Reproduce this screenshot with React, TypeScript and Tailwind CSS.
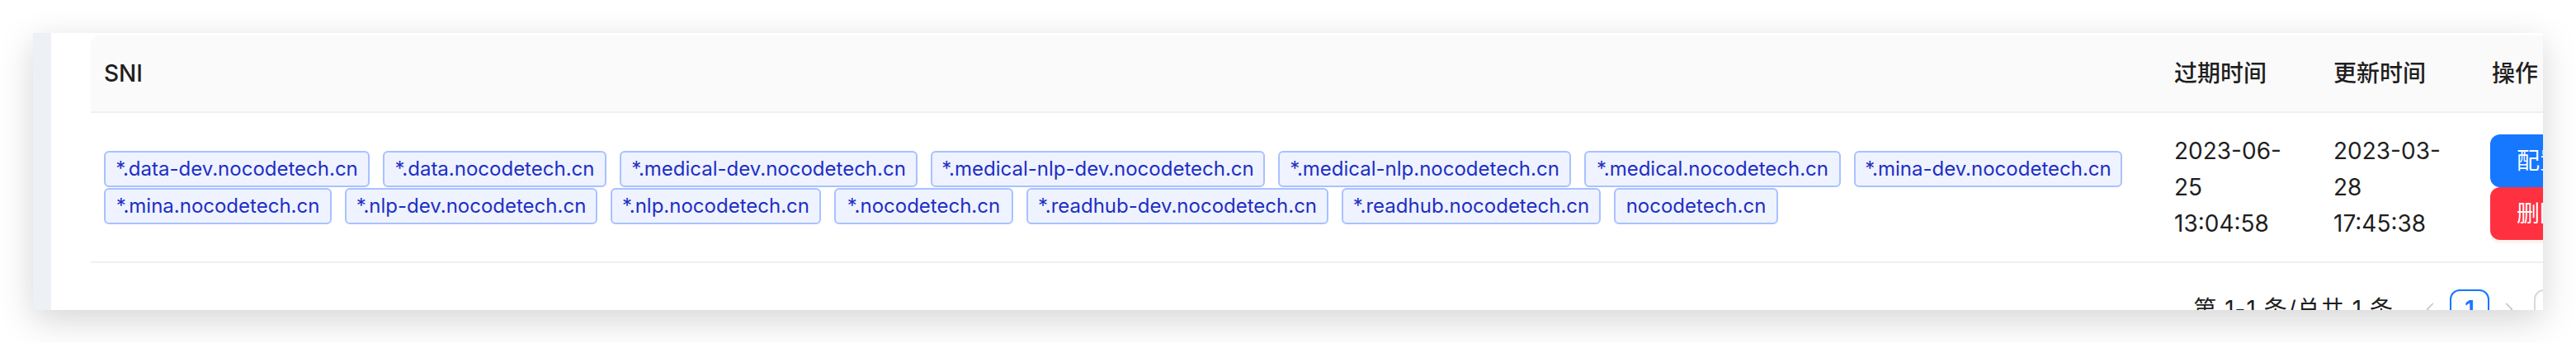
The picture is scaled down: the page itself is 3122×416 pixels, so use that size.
import { ChevronLeft, ChevronRight } from 'lucide-react';

const rowOne = [
  { name: '*.data-dev.nocodetech.cn', w: 'w-[322px]' },
  { name: '*.data.nocodetech.cn', w: 'w-[271px]' },
  { name: '*.medical-dev.nocodetech.cn', w: 'w-[361px]' },
  { name: '*.medical-nlp-dev.nocodetech.cn', w: 'w-[405px]' },
  { name: '*.medical-nlp.nocodetech.cn', w: 'w-[355px]' },
  { name: '*.medical.nocodetech.cn', w: 'w-[311px]' },
  { name: '*.mina-dev.nocodetech.cn', w: 'w-[325px]' },
];

const rowTwo = [
  { name: '*.mina.nocodetech.cn', w: 'w-[276px]' },
  { name: '*.nlp-dev.nocodetech.cn', w: 'w-[306px]' },
  { name: '*.nlp.nocodetech.cn', w: 'w-[255px]' },
  { name: '*.nocodetech.cn', w: 'w-[217px]' },
  { name: '*.readhub-dev.nocodetech.cn', w: 'w-[366px]' },
  { name: '*.readhub.nocodetech.cn', w: 'w-[314px]' },
  { name: 'nocodetech.cn', w: 'w-[199px]' },
];

function Tag({ name, w }: { name: string; w: string }) {
  return (
    <span
      className={`${w} h-[44px] shrink-0 flex items-center justify-center whitespace-nowrap rounded-[6px] border-2 border-[#a9c1ff] bg-[#eef3ff] text-[24px] leading-[40px] text-[#1f2ec4]`}
    >
      {name}
    </span>
  );
}

function DateCell({ lines }: { lines: string[] }) {
  return (
    <td className="px-[16px] py-[24px] align-middle border-b-2 border-[#f0f0f0]">
      {lines.map((l) => (
        <div key={l} className="text-[28px] leading-[44px] text-[#1f1f1f]">
          {l}
        </div>
      ))}
    </td>
  );
}

export default function App() {
  return (
    <div className="w-[3122px] h-[416px] overflow-hidden bg-white pt-[40px] pl-[40px] font-['Inter','Noto_Sans_CJK_SC',sans-serif]">
      <div className="w-[3042px] h-[336px] flex overflow-hidden bg-white shadow-[0_12px_40px_rgba(0,0,0,0.17)]">
        <div className="w-[22px] shrink-0 bg-[#edf0f4]"></div>
        <div className="flex-1 overflow-hidden pl-[48px] pt-[3px]">
          <div className="w-[3137px]">
            <table className="w-[3137px] table-fixed border-collapse">
              <colgroup>
                <col className="w-[2509px]" />
                <col className="w-[193px]" />
                <col className="w-[192px]" />
                <col className="w-[243px]" />
              </colgroup>
              <thead>
                <tr className="bg-[#fafafa]">
                  {['SNI', '过期时间', '更新时间', '操作'].map((h, i) => (
                    <th
                      key={h}
                      className={`px-[16px] py-[24px] text-left text-[28px] leading-[44px] font-medium text-[#1f1f1f] border-b-2 border-[#f0f0f0] ${i === 0 ? 'rounded-tl-[10px]' : ''}`}
                    >
                      {h}
                    </th>
                  ))}
                </tr>
              </thead>
              <tbody>
                <tr>
                  <td className="px-[16px] py-[24px] align-middle border-b-2 border-[#f0f0f0]">
                    <div className="flex flex-col gap-[1px]">
                      <div className="flex gap-[16px]">
                        {rowOne.map((t) => (
                          <Tag key={t.name} {...t} />
                        ))}
                      </div>
                      <div className="flex gap-[16px]">
                        {rowTwo.map((t) => (
                          <Tag key={t.name} {...t} />
                        ))}
                      </div>
                    </div>
                  </td>
                  <DateCell lines={['2023-06-', '25', '13:04:58']} />
                  <DateCell lines={['2023-03-', '28', '17:45:38']} />
                  <td className="pl-[14px] pr-[16px] py-[24px] align-middle border-b-2 border-[#f0f0f0]">
                    <div className="flex flex-col">
                      <button className="w-[120px] h-[64px] rounded-[12px] bg-[#1677ff] text-white text-[28px] flex items-center justify-center">
                        配置
                      </button>
                      <button className="w-[120px] h-[64px] rounded-[12px] bg-[#ff3141] text-white text-[28px] flex items-center justify-center shadow-[0_4px_0_rgba(255,38,5,0.06)]">
                        删除
                      </button>
                    </div>
                  </td>
                </tr>
              </tbody>
            </table>
            <div className="mt-[32px] flex items-center justify-end h-[48px]">
              <span className="mr-[20px] text-[28px] leading-[48px] tracking-[1px] text-[#1f1f1f]">第 1-1 条/总共 1 条</span>
              <span className="w-[48px] h-[48px] flex items-center justify-center text-[#c4c4c4]">
                <ChevronLeft className="w-[26px] h-[26px]" strokeWidth={1.6} />
              </span>
              <span className="w-[48px] h-[48px] flex items-center justify-center rounded-[12px] border-2 border-[#1677ff] text-[28px] font-semibold text-[#1677ff]">
                1
              </span>
              <span className="w-[48px] h-[48px] flex items-center justify-center text-[#c4c4c4]">
                <ChevronRight className="w-[26px] h-[26px]" strokeWidth={1.6} />
              </span>
              <span className="ml-[6px] w-[176px] h-[48px] rounded-[12px] border-2 border-[#d9d9d9] px-[16px] text-[28px] leading-[44px] text-[#1f1f1f]">
                10 条/页
              </span>
            </div>
          </div>
        </div>
      </div>
    </div>
  );
}
